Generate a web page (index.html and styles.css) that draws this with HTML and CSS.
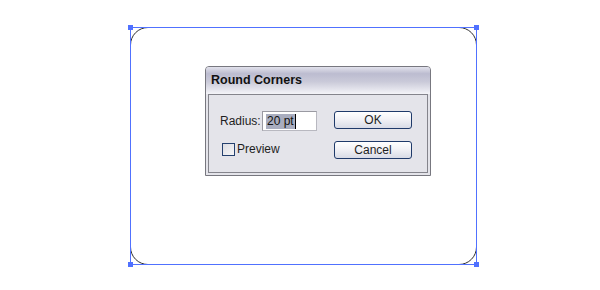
FILE: index.html
```html
<!DOCTYPE html>
<html>
<head>
<meta charset="utf-8">
<link rel="stylesheet" href="styles.css">
</head>
<body>
<div class="stage">
  <div class="art">
    <div class="bbox">
      <span class="handle tl"></span>
      <span class="handle tr"></span>
      <span class="handle bl"></span>
      <span class="handle br"></span>
    </div>
  </div>
  <div class="dialog">
    <div class="titlebar">Round Corners</div>
    <div class="panel">
      <div class="fields">
        <div class="row radius">
          <span class="label">Radius:</span>
          <div class="input"><span class="sel">20 pt</span><span class="caret"></span></div>
        </div>
        <label class="row preview">
          <span class="check"></span>
          <span class="label">Preview</span>
        </label>
      </div>
      <div class="buttons">
        <div class="btn">OK</div>
        <div class="btn">Cancel</div>
      </div>
    </div>
  </div>
</div>
</body>
</html>
```

FILE: styles.css
```css
html, body {
  margin: 0;
  padding: 0;
  background: #ffffff;
}
.stage {
  position: relative;
  width: 600px;
  height: 290px;
  padding: 27px 0 0 130px;
  box-sizing: border-box;
  font-family: "Liberation Sans", Arial, sans-serif;
}
.art {
  position: relative;
  width: 347px;
  height: 238px;
  box-sizing: border-box;
  border: 1px solid #2e2e2e;
  border-radius: 18px;
}
.bbox {
  position: absolute;
  left: -1px;
  top: -1px;
  right: -1px;
  bottom: -1px;
  border: 1px solid #5071ff;
}
.handle {
  position: absolute;
  width: 5px;
  height: 5px;
  background: #5071ff;
}
.handle.tl { left: -3px; top: -3px; }
.handle.tr { right: -3px; top: -3px; }
.handle.bl { left: -3px; bottom: -3px; }
.handle.br { right: -3px; bottom: -3px; }

.dialog {
  position: absolute;
  left: 205px;
  top: 66px;
  width: 226px;
  height: 110px;
  box-sizing: border-box;
  border: 1px solid #77777f;
  border-radius: 4px 4px 0 0;
  background: #e4e4ea;
  display: flex;
  flex-direction: column;
}
.titlebar {
  height: 27px;
  box-sizing: border-box;
  padding: 6px 0 0 5px;
  border-radius: 3px 3px 0 0;
  background: linear-gradient(#e2e2ec 0%, #bcbcd0 25%, #cacad9 55%, #f4f4f8 100%);
  font-weight: bold;
  font-size: 12.5px;
  color: #111;
}
.panel {
  flex: 1;
  margin: 0 2px 2px 2px;
  border: 1px solid #84848c;
  display: flex;
  padding: 16px 0 0 11px;
  box-sizing: border-box;
}
.fields {
  width: 105px;
  display: flex;
  flex-direction: column;
  gap: 11px;
}
.row {
  display: flex;
  align-items: center;
  font-size: 12px;
  color: #1e1e1e;
}
.radius .label {
  width: 42px;
}
.input {
  width: 55px;
  height: 20px;
  box-sizing: border-box;
  background: #ffffff;
  border: 1px solid #b8b8c0;
  border-top-color: #9a9aa2;
  border-left-color: #9a9aa2;
  display: flex;
  align-items: center;
  padding-left: 3px;
}
.sel {
  background: #a9adbf;
  color: #111;
  line-height: 15px;
  padding: 0 1px;
}
.caret {
  width: 1px;
  height: 15px;
  background: #000;
}
.preview {
  padding-left: 2px;
}
.check {
  width: 13px;
  height: 13px;
  box-sizing: border-box;
  border: 1px solid #24406e;
  background: linear-gradient(135deg, #dcdce2, #f6f6f8);
  margin-right: 2px;
}
.buttons {
  margin-left: 9px;
  display: flex;
  flex-direction: column;
  gap: 12px;
}
.btn {
  width: 78px;
  height: 18px;
  box-sizing: border-box;
  border: 1px solid #1f3a6a;
  border-radius: 3px;
  background: linear-gradient(#ffffff 0%, #f2f2f6 45%, #d8dbe6 100%);
  font-size: 12px;
  color: #1e1e1e;
  text-align: center;
  line-height: 16px;
}
```
